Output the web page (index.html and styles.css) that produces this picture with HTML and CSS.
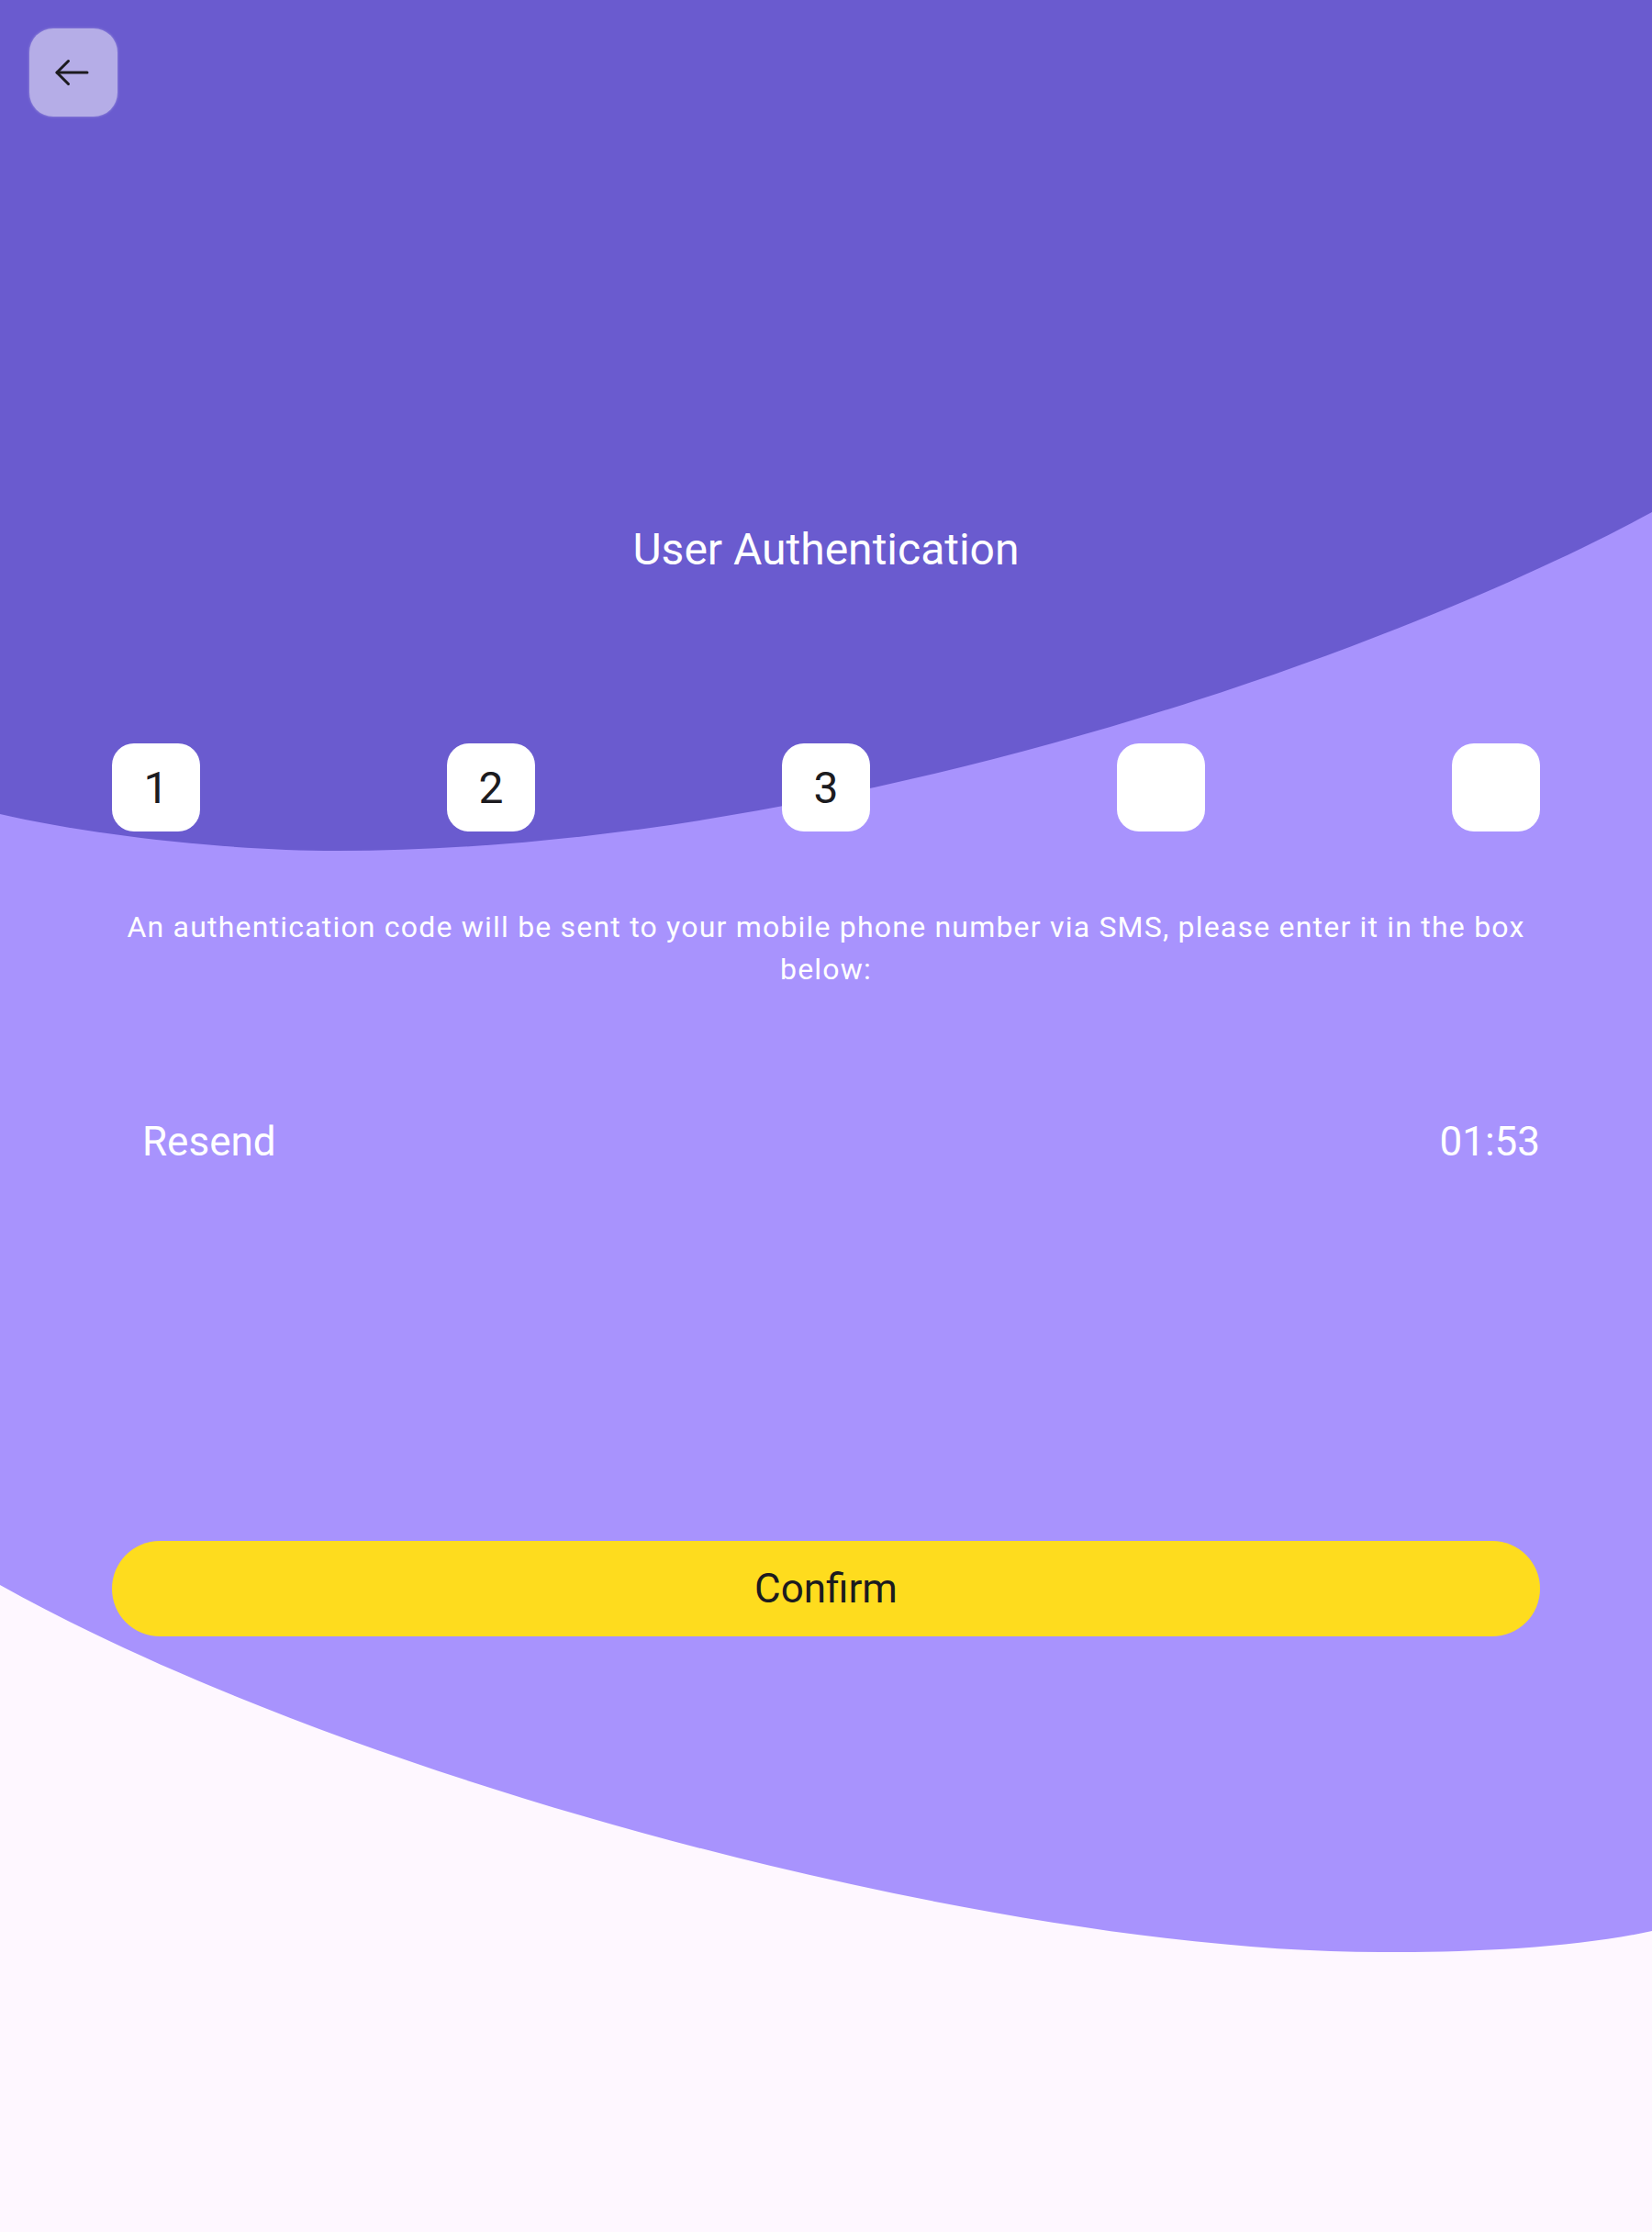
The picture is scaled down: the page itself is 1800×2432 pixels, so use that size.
FILE: index.html
```html
<!DOCTYPE html>
<html lang="en">
<head>
<meta charset="utf-8">
<title>User Authentication</title>
<link rel="stylesheet" href="styles.css">
</head>
<body>
<div class="page">
  <svg class="bg" width="1800" height="2432" viewBox="0 0 1800 2432" aria-hidden="true">
    <path class="bg-light" d="M0 0 H1800 V2104 C1720 2122 1600 2128 1504 2127 C1100 2127 400 1950 0 1727 Z"/>
    <path class="bg-dark" d="M0 0 H1800 V558 C1500 720 900 927 367 927 C250 927 100 910 0 887 Z"/>
  </svg>
  <main class="content">
    <header class="topbar">
      <button class="back-btn" type="button" aria-label="Back">
        <svg width="48" height="48" viewBox="0 0 48 48">
          <path d="M6 24 H39" stroke="#1c1b1f" stroke-width="3" fill="none" stroke-linecap="round"/>
          <path d="M18.5 11.5 L6 24 L18.5 36.5" stroke="#1c1b1f" stroke-width="3" fill="none" stroke-linecap="round" stroke-linejoin="round"/>
        </svg>
      </button>
    </header>
    <h1 class="title">User Authentication</h1>
    <div class="code-row">
      <div class="code-box">1</div>
      <div class="code-box">2</div>
      <div class="code-box">3</div>
      <div class="code-box"></div>
      <div class="code-box"></div>
    </div>
    <p class="desc">An authentication code will be sent to your mobile phone number via SMS, please enter it in the box below:</p>
    <div class="resend-row">
      <span class="resend">Resend</span>
      <span class="timer">01:53</span>
    </div>
    <div class="confirm-wrap">
      <button class="confirm" type="button">Confirm</button>
    </div>
  </main>
</div>
</body>
</html>
```

FILE: styles.css
```css
* { box-sizing: border-box; }
html, body { margin: 0; padding: 0; }
body {
  font-family: Roboto, "Noto Sans", "Liberation Sans", sans-serif;
  background: #fef7ff;
}
.page {
  position: relative;
  width: 1800px;
  height: 2432px;
  overflow: hidden;
  background: #fef7ff;
}
.bg {
  position: absolute;
  left: 0;
  top: 0;
  z-index: 0;
}
.bg-light { fill: #a893fd; }
.bg-dark { fill: #6a5bcf; }
.content {
  position: relative;
  z-index: 1;
  display: flex;
  flex-direction: column;
}
.topbar {
  padding: 31px 0 0 32px;
  height: 127px;
}
.back-btn {
  width: 96px;
  height: 96px;
  border: none;
  border-radius: 26px;
  background: rgba(255, 255, 255, 0.5);
  box-shadow: 0 0 3px rgba(255, 255, 255, 0.35);
  display: flex;
  align-items: center;
  justify-content: center;
  padding: 0;
}
.title {
  margin: 442px 0 0;
  font-size: 48px;
  line-height: 60px;
  font-weight: 400;
  color: #ffffff;
  text-align: center;
}
.code-row {
  margin-top: 181px;
  padding: 0 122px;
  display: flex;
  justify-content: space-between;
}
.code-box {
  width: 96px;
  height: 96px;
  border-radius: 24px;
  background: #ffffff;
  display: flex;
  align-items: center;
  justify-content: center;
  font-size: 48px;
  color: #1c1b1f;
}
.desc {
  margin: 81px 0 0;
  padding: 0 122px;
  font-size: 32px;
  line-height: 46px;
  letter-spacing: 1.2px;
  color: #ffffff;
  text-align: center;
}
.resend-row {
  margin-top: 139px;
  padding: 0 122px 0 155px;
  display: flex;
  justify-content: space-between;
  font-size: 44px;
  line-height: 52px;
  color: #ffffff;
}
.confirm-wrap {
  margin-top: 409px;
  padding: 0 122px;
}
.confirm {
  width: 100%;
  height: 104px;
  border: none;
  border-radius: 52px;
  background: #fedc1e;
  font-family: Roboto, "Noto Sans", "Liberation Sans", sans-serif;
  font-size: 44px;
  color: #1c1b1f;
  padding: 0;
}
```
